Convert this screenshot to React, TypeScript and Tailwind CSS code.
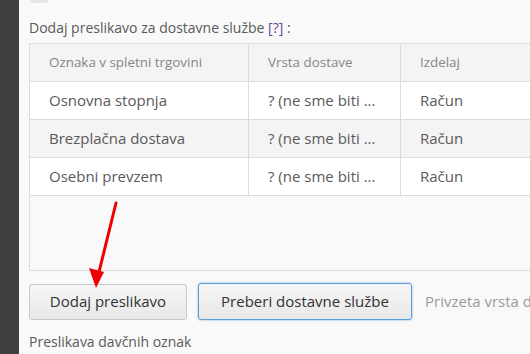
const rows = [
  { name: "Osnovna stopnja", type: "? (ne sme biti ...", doc: "Račun" },
  { name: "Brezplačna dostava", type: "? (ne sme biti ...", doc: "Račun" },
  { name: "Osebni prevzem", type: "? (ne sme biti ...", doc: "Račun" },
];

const Arrow = () => (
  <svg className="absolute left-0 top-0 pointer-events-none" width="530" height="354">
    <line x1="116" y1="203" x2="99" y2="272" stroke="#f00000" strokeWidth="3" strokeLinecap="round" />
    <polygon points="89,268 104,272 96,288" fill="#f00000" />
  </svg>
);

export default function App() {
  return (
    <div className="relative flex w-[530px] h-[354px] overflow-hidden bg-[#f9f9f9] text-[#5a5a5a]" style={{ fontFamily: '"Open Sans", sans-serif' }}>
      <div className="w-[19px] shrink-0 bg-[#3e3e3e]" />
      <div className="flex-1 min-w-0 pl-[10px]">
        <div className="ml-[1px] w-[18px] h-[3px] rounded-b bg-[#e6e6e6]" />
        <div className="mt-[17px] h-[16px] text-[14px] leading-[16px] whitespace-nowrap">
          Dodaj preslikavo za dostavne službe <span className="text-[#6b3fa0]">[?]</span> :
        </div>
        <div className="mt-[7px] w-[560px] h-[228px] border border-[#dcdcdc] bg-[#f9f9f9]">
          <div className="flex h-[38px] border-b border-[#dcdcdc] bg-[#f4f4f4] text-[13.4px] text-[#858585]">
            <div className="w-[219px] flex items-center pl-[19px] border-r border-[#dcdcdc]">Oznaka v spletni trgovini</div>
            <div className="w-[152px] flex items-center pl-[19px] border-r border-[#dcdcdc]">Vrsta dostave</div>
            <div className="flex-1 flex items-center pl-[19px]">Izdelaj</div>
          </div>
          {rows.map((r, i) => (
            <div key={r.name} className={`flex h-[38px] border-b border-[#dcdcdc] text-[15px] ${i % 2 === 1 ? "bg-[#f4f4f4]" : "bg-white"}`}>
              <div className="w-[219px] flex items-center pl-[19px] border-r border-[#dcdcdc]">{r.name}</div>
              <div className="w-[152px] flex items-center pl-[19px] border-r border-[#dcdcdc]">{r.type}</div>
              <div className="flex-1 flex items-center pl-[19px]">{r.doc}</div>
            </div>
          ))}
        </div>
        <div className="mt-[12px] flex items-center gap-[11px] whitespace-nowrap">
          <button className="shrink-0 h-[36px] w-[158px] rounded-[3px] border border-[#c8c8c8] bg-gradient-to-b from-[#f6f6f6] to-[#e8e8e8] text-[15px] text-[#333]">
            Dodaj preslikavo
          </button>
          <button className="shrink-0 h-[37px] w-[214px] rounded-[3px] border border-[#5b9dd9] shadow-[0_0_2px_#5b9dd9] bg-gradient-to-b from-[#f6f6f6] to-[#e8e8e8] text-[15px] text-[#333]">
            Preberi dostavne službe
          </button>
          <span className="shrink-0 ml-[2px] text-[15px] text-[#999]">Privzeta vrsta dostave</span>
        </div>
        <div className="mt-[14px] text-[14px] leading-[16px] whitespace-nowrap">Preslikava davčnih oznak</div>
      </div>
      <Arrow />
    </div>
  );
}
